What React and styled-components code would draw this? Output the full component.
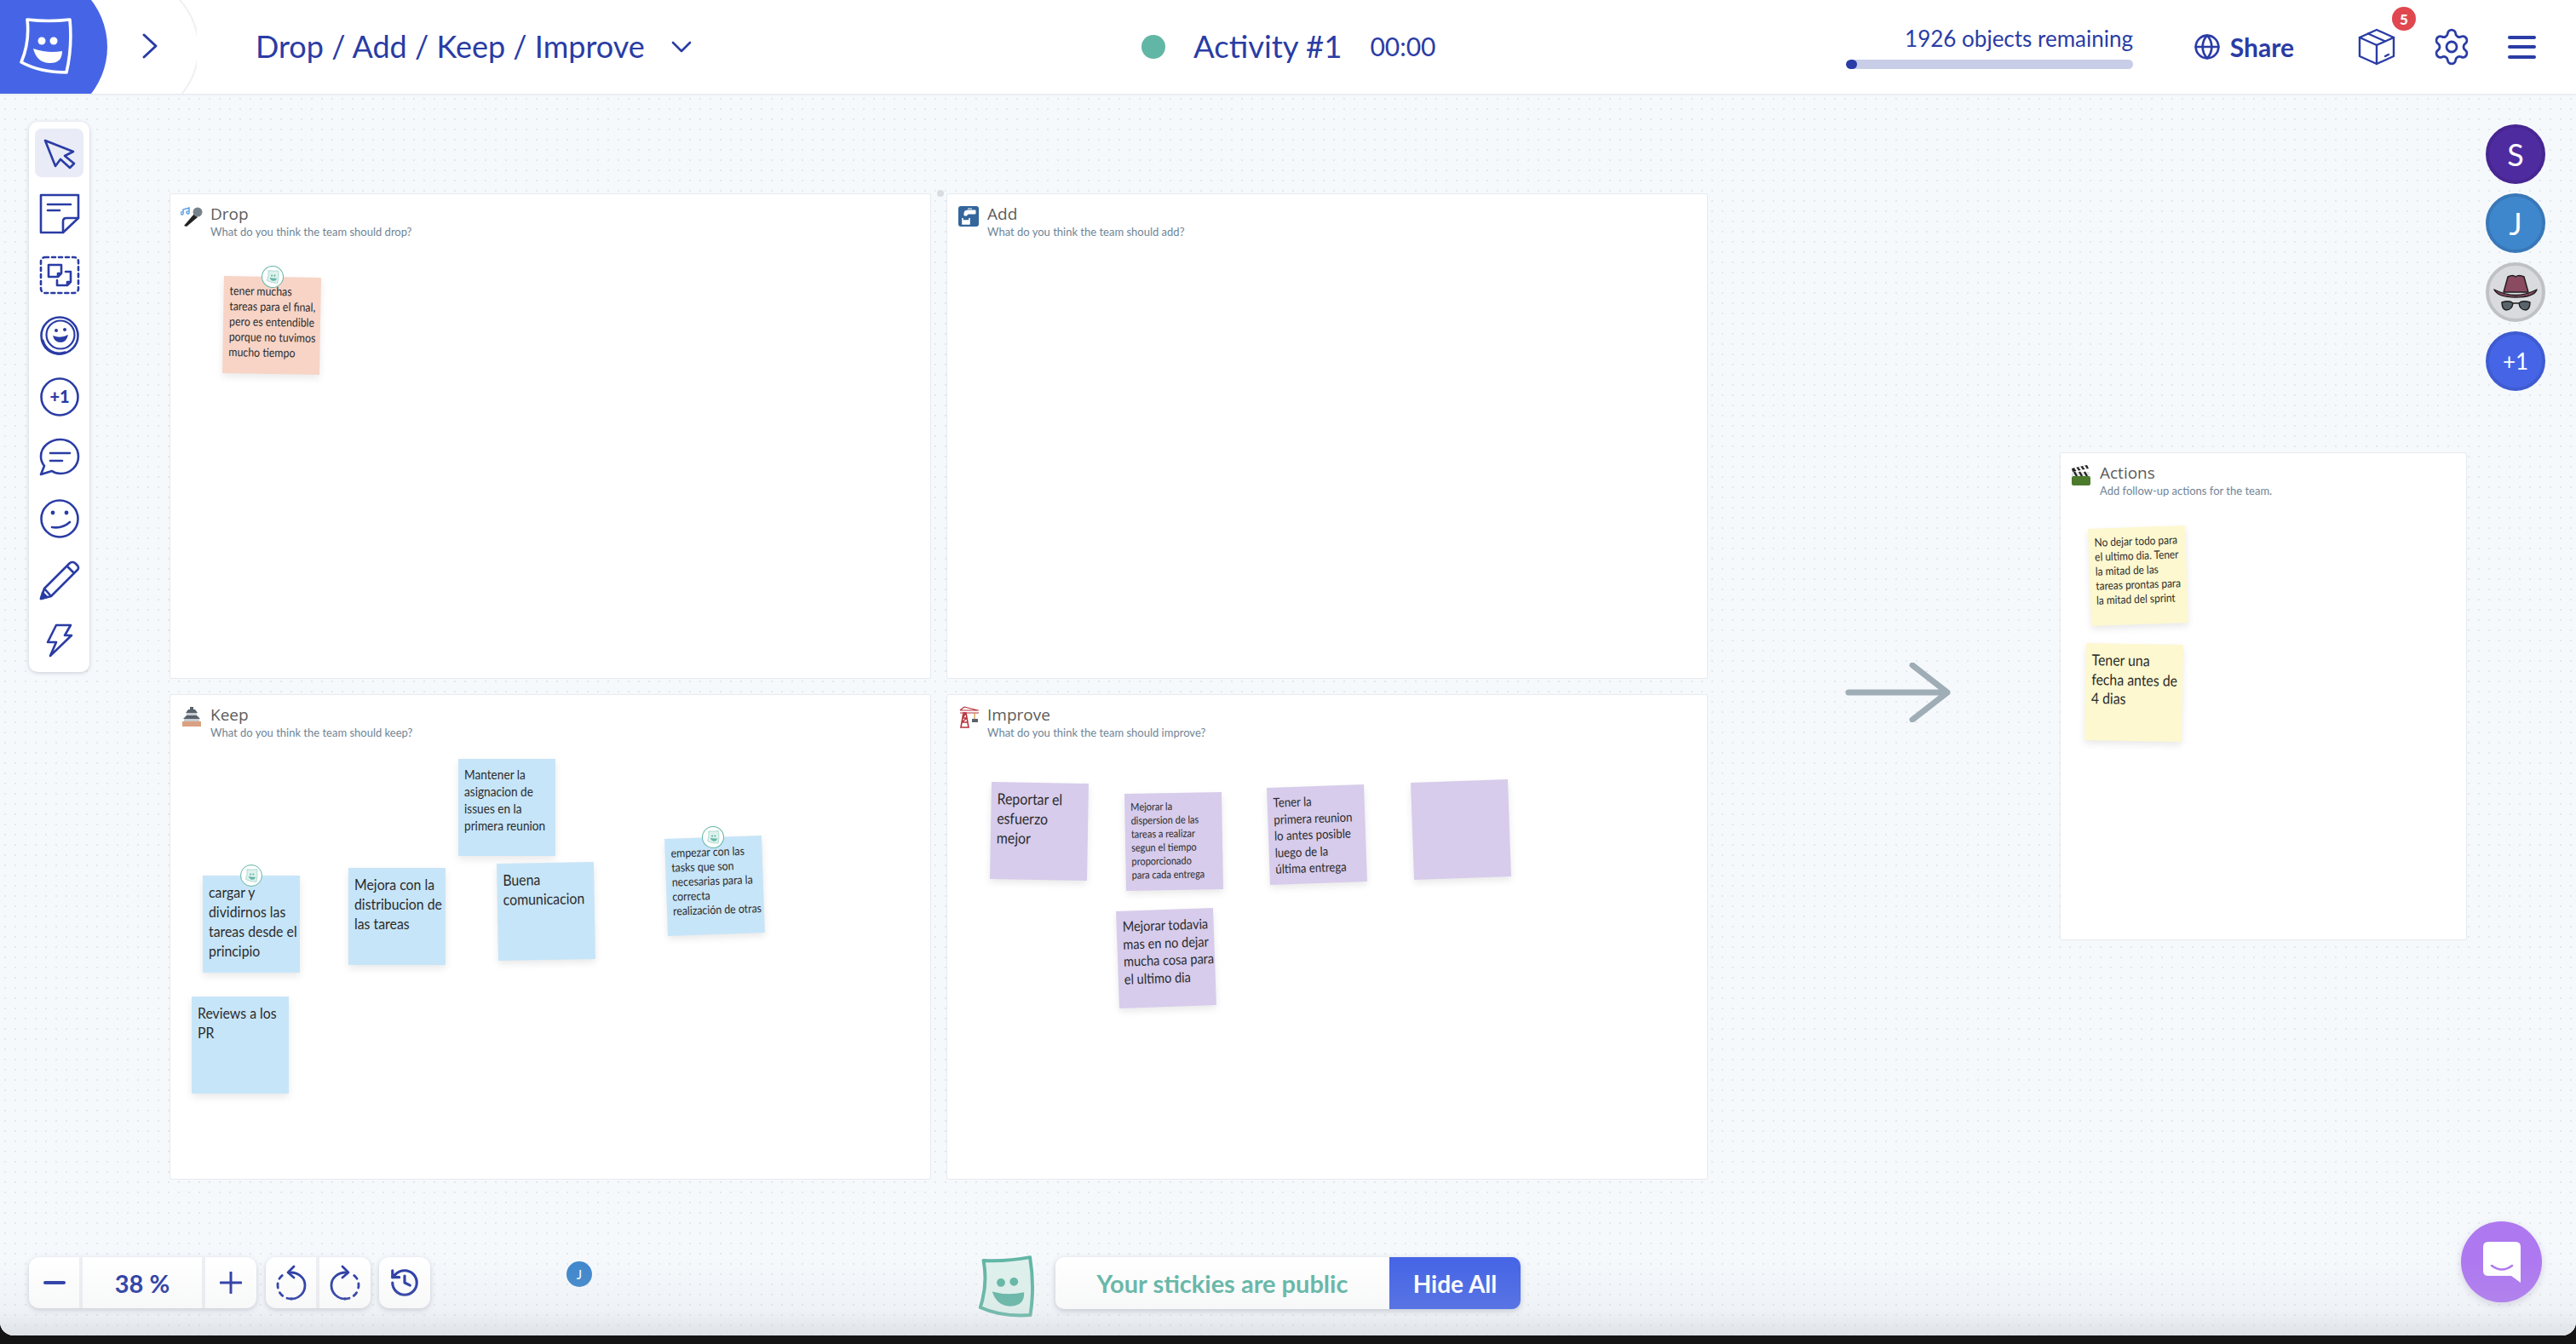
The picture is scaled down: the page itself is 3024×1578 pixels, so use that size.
import React from 'react'
import styled, { createGlobalStyle } from 'styled-components'
import { Globe, History, Settings } from 'lucide-react'

const INK = '#2a3ca5'
const TEAL = '#62b6a5'

const GlobalStyle = createGlobalStyle`
  html, body { margin: 0; padding: 0; background: #111; }
  body { font-family: Lato, "Noto Sans", sans-serif; color: ${INK}; }
`

const Frame = styled.div`
  width: 3024px;
  height: 1578px;
  background: #141414;
  overflow: hidden;
`

const Stage = styled.div`
  position: relative;
  width: 3024px;
  height: 1568px;
  display: flex;
  flex-direction: column;
  border-radius: 0 0 16px 16px;
  overflow: hidden;
  background-color: #f6f9fc;
`

const BottomShade = styled.div`
  position: absolute;
  left: 0;
  right: 0;
  bottom: 0;
  height: 90px;
  pointer-events: none;
  background: linear-gradient(
    to bottom,
    rgba(200, 204, 210, 0),
    rgba(200, 204, 210, 0.14) 65%,
    rgba(200, 204, 210, 0.5)
  );
  z-index: 5;
`

/* header */
const Header = styled.header`
  flex: 0 0 110px;
  height: 110px;
  display: flex;
  align-items: center;
  background: #fff;
  box-shadow: 0 1px 3px rgba(40, 50, 80, 0.1);
  z-index: 3;
`

const LeftSection = styled.div`
  flex: 0 0 1340px;
  display: flex;
  align-items: center;
`

const LogoBlock = styled.div`
  position: relative;
  flex: 0 0 231px;
  height: 110px;
  overflow: hidden;
`

const Ring = styled.div`
  position: absolute;
  left: 65px;
  top: -28px;
  width: 165px;
  height: 165px;
  border-radius: 50%;
  background: #fff;
  border: 2px solid #eef0f3;
  box-sizing: content-box;
`

const LogoDisc = styled.div`
  position: absolute;
  left: -52px;
  top: -34px;
  width: 178px;
  height: 178px;
  border-radius: 50%;
  background: #4665e6;
`

const LogoMark = styled.svg`
  position: absolute;
  left: 23px;
  top: 21px;
`

const ExpandIcon = styled.svg`
  position: absolute;
  left: 166px;
  top: 38px;
`

const Title = styled.div`
  margin-left: 69px;
  margin-bottom: 3px;
  font-size: 36px;
  white-space: nowrap;
`

const TitleCaret = styled.svg`
  margin-left: 31px;
`

const CenterSection = styled.div`
  display: flex;
  align-items: center;
`

const StatusDot = styled.div`
  width: 28px;
  height: 28px;
  border-radius: 50%;
  background: ${TEAL};
`

const ActivityName = styled.div`
  margin-left: 33px;
  margin-bottom: 3px;
  font-size: 36.5px;
  white-space: nowrap;
`

const Timer = styled.div`
  margin-left: 33px;
  margin-bottom: 2px;
  font-size: 30px;
  white-space: nowrap;
`

const RightSection = styled.div`
  margin-left: auto;
  padding-right: 47px;
  display: flex;
  align-items: center;
`

const Progress = styled.div`
  width: 337px;
  display: flex;
  flex-direction: column;
  align-items: flex-end;
  gap: 10px;
`

const ProgressLabel = styled.div`
  font-size: 26px;
  line-height: 30px;
  white-space: nowrap;
`

const ProgressTrack = styled.div`
  width: 100%;
  height: 11px;
  border-radius: 6px;
  background: #c8cde8;
  overflow: hidden;
`

const ProgressFill = styled.div`
  width: 13px;
  height: 100%;
  border-radius: 6px;
  background: ${INK};
`

const ShareButton = styled.div`
  margin-left: 71px;
  width: 118px;
  display: flex;
  align-items: center;
  justify-content: space-between;
  font-size: 30px;
  font-weight: 700;
`

const BoxButton = styled.div`
  position: relative;
  margin-left: 75px;
  width: 44px;
  height: 44px;
  display: flex;
`

const CountBadge = styled.div`
  position: absolute;
  left: 40px;
  top: -25px;
  width: 28px;
  height: 28px;
  border-radius: 50%;
  background: #e0474f;
  color: #fff;
  font-size: 17px;
  font-weight: 900;
  display: flex;
  align-items: center;
  justify-content: center;
`

const GearButton = styled.div`
  margin-left: 42px;
  display: flex;
`

const MenuButton = styled.div`
  margin-left: 42px;
  width: 33px;
  display: flex;
  flex-direction: column;
  gap: 7.5px;
`

const MenuLine = styled.div`
  height: 4px;
  border-radius: 2px;
  background: ${INK};
`

/* canvas */
const Canvas = styled.main`
  position: relative;
  flex: 1;
  padding: 118px 0 0 200px;
  background-color: #f6f9fc;
  background-image: radial-gradient(#e3e8ee 1px, transparent 1.3px);
  background-size: 12px 12px;
`

const Board = styled.div`
  display: grid;
  grid-template-columns: 892px 892px;
  grid-template-rows: 568px 568px;
  gap: 20px;
  width: 1804px;
`

const Panel = styled.section`
  position: relative;
  background: #fff;
  box-shadow: 0 0 0 1px #e7eaee;
  border-radius: 2px;
`

const ActionsPanel = styled(Panel)`
  position: absolute;
  left: 2419px;
  top: 422px;
  width: 476px;
  height: 571px;
`

const PanelHead = styled.div`
  display: grid;
  grid-template-columns: 26px auto;
  column-gap: 9px;
  padding: 11px 0 0 ${(p) => p.$inset || 12}px;
`

const PanelIcon = styled.svg`
  grid-row: 1 / span 2;
  margin-top: 2px;
`

const PanelTitle = styled.div`
  font-family: "Open Sans", sans-serif;
  font-size: 19px;
  line-height: 24px;
  color: #5c5c5c;
`

const PanelHint = styled.div`
  font-family: Lato, sans-serif;
  font-size: 13px;
  line-height: 17px;
  margin-top: 1px;
  color: #6f8596;
`

const BoardDot = styled.div`
  position: absolute;
  left: 1100px;
  top: 113px;
  width: 8px;
  height: 8px;
  border-radius: 50%;
  background: #d9dce0;
`

const stickyColors = {
  blue: '#c7e5f8',
  purple: '#d7cceb',
  yellow: '#fdf8cf',
  peach: '#f8d4c6'
}

const Sticky = styled.div`
  position: absolute;
  left: ${(p) => p.$x}px;
  top: ${(p) => p.$y}px;
  width: 114px;
  height: 114px;
  box-sizing: border-box;
  padding: 8px 7px;
  background: ${(p) => stickyColors[p.$color]};
  transform: rotate(${(p) => p.$rot || 0}deg);
  box-shadow: 0 4px 9px rgba(0, 0, 0, 0.09);
`

// the handwriting face isn't installed, so Lato gets squeezed to the same widths
const StickyText = styled.div`
  font-family: Lato, sans-serif;
  font-size: ${(p) => p.$size || 16}px;
  line-height: ${(p) => p.$lead || 20}px;
  color: #2b2b2b;
  white-space: pre;
  transform: scaleX(0.88);
  transform-origin: left top;
`

const OwnerBadge = styled.div`
  position: absolute;
  left: 44px;
  top: -13px;
  width: 26px;
  height: 26px;
  box-sizing: border-box;
  border-radius: 50%;
  background: #fff;
  border: 1px solid ${TEAL};
  display: flex;
  align-items: center;
  justify-content: center;
`

const FlowArrow = styled.svg`
  position: absolute;
  left: 2166px;
  top: 668px;
`

/* left toolbar */
const Toolbar = styled.nav`
  position: absolute;
  left: 34px;
  top: 33px;
  width: 71px;
  height: 646px;
  box-sizing: border-box;
  padding-top: 8px;
  display: flex;
  flex-direction: column;
  align-items: center;
  gap: 14.6px;
  background: #fff;
  border-radius: 10px;
  box-shadow: 0 1px 5px rgba(40, 50, 80, 0.22);
`

const ToolButton = styled.div`
  flex: 0 0 57px;
  width: 57px;
  display: flex;
  align-items: center;
  justify-content: center;
  border-radius: 8px;
  background: ${(p) => (p.$active ? '#e9ebf6' : 'transparent')};
`

const ToolGlyph = ({ children }) => (
  <svg width="48" height="48" viewBox="0 0 48 48" fill="none" stroke={INK} strokeWidth="2.6" strokeLinejoin="round" strokeLinecap="round">
    {children}
  </svg>
)

/* right avatars */
const Avatars = styled.div`
  position: absolute;
  right: 36px;
  top: 36px;
  display: flex;
  flex-direction: column;
  gap: 11px;
`

const Avatar = styled.div`
  width: 70px;
  height: 70px;
  box-sizing: border-box;
  border-radius: 50%;
  border: 4px solid ${(p) => p.$edge};
  background: ${(p) => p.$fill};
  color: #fff;
  font-size: ${(p) => p.$size || 36}px;
  display: flex;
  align-items: center;
  justify-content: center;
`

/* bottom controls */
const BottomBar = styled.div`
  position: absolute;
  left: 34px;
  top: 1366px;
  display: flex;
  align-items: flex-start;
`

const ControlGroup = styled.div`
  display: flex;
  height: 60px;
  margin-right: ${(p) => p.$gap || 0}px;
  background: #fff;
  border-radius: 12px;
  box-shadow: 0 2px 6px rgba(40, 50, 80, 0.22);
  overflow: hidden;
`

const ControlCell = styled.div`
  box-sizing: border-box;
  width: ${(p) => p.$width}px;
  display: flex;
  align-items: center;
  justify-content: center;
  font-size: 29px;
  font-weight: 700;
  & + & {
    border-left: 4px solid #eeeff2;
  }
`

const Mascot = styled.svg`
  margin-left: 642px;
  margin-top: -3px;
  transform: rotate(-4deg);
`

const StickiesPill = styled.div`
  margin-left: 22px;
  display: flex;
  width: 546px;
  height: 61px;
  border-radius: 10px;
  overflow: hidden;
  background: #fff;
  box-shadow: 0 2px 6px rgba(40, 50, 80, 0.25);
`

const PillLabel = styled.div`
  flex: 1;
  display: flex;
  align-items: center;
  justify-content: center;
  color: ${TEAL};
  font-size: 29px;
  font-weight: 700;
`

const PillAction = styled.div`
  flex: 0 0 154px;
  display: flex;
  align-items: center;
  justify-content: center;
  background: #4665e6;
  color: #fff;
  font-size: 28px;
  font-weight: 700;
`

const CursorTag = styled.div`
  position: absolute;
  left: 665px;
  top: 1371px;
  width: 30px;
  height: 30px;
  border-radius: 50%;
  background: #3f87cc;
  color: #fff;
  font-size: 15px;
  display: flex;
  align-items: center;
  justify-content: center;
`

const ChatButton = styled.div`
  position: absolute;
  left: 2889px;
  top: 1324px;
  width: 95px;
  height: 95px;
  border-radius: 50%;
  background: #ae78f0;
  box-shadow: 0 3px 10px rgba(80, 60, 120, 0.2);
  display: flex;
  align-items: center;
  justify-content: center;
`

const MascotShape = ({ line, fill, mouth, width, height }) => (
  <svg width={width} height={height} viewBox="0 0 64 66" fill="none">
    <path d="M9 2 Q34 5 59 2 Q62 34 55 64 Q24 64 2 52 Q12 28 9 2 Z" stroke={line} strokeWidth="4" fill={fill} strokeLinejoin="round" />
    <circle cx="26" cy="27" r="4.5" fill={mouth} />
    <circle cx="40" cy="27" r="4.5" fill={mouth} />
    <path d="M16 36 Q33 42 50 39 Q50 54 34 53 Q20 52 16 36 Z" fill={mouth} />
  </svg>
)

const MiniMascot = () => <MascotShape line="#a9d8ce" fill="#dff1ed" mouth={TEAL} width={15} height={16} />

const MicIcon = () => (
  <PanelIcon width="26" height="26" viewBox="0 0 26 26">
    <path d="M4 24 L16 10 L20 14 L7 25 Z" fill="#222" />
    <circle cx="20" cy="8" r="5.5" fill="#78828c" />
    <path d="M3 9 V5 L10 3 V8 M3 9 a1.5 1.5 0 1 1 -1 -1 M10 8 a1.5 1.5 0 1 1 -1 -1" stroke="#5b9fe6" strokeWidth="1.5" fill="none" />
  </PanelIcon>
)

const TapIcon = () => (
  <PanelIcon width="26" height="26" viewBox="0 0 26 26">
    <rect x="1" y="1" width="24" height="24" rx="3" fill="#34659c" />
    <path d="M8 9 Q8 6 12 6 H21 V10 H13 Q11 10 11 12 H8 Z M12 4 H17" fill="#fff" stroke="#fff" strokeWidth="1" />
    <path d="M6 15 V22 H14 V15 M6 18 H14" stroke="#fff" strokeWidth="1.6" fill="none" />
    <rect x="6" y="18" width="8" height="4" fill="#fff" />
  </PanelIcon>
)

const CastleIcon = () => (
  <PanelIcon width="26" height="26" viewBox="0 0 26 26">
    <rect x="11" y="1" width="4" height="3" fill="#59636c" />
    <path d="M6 8 L9 4 H17 L20 8 Z" fill="#59636c" />
    <rect x="7" y="8" width="12" height="3" fill="#c9ccd0" />
    <path d="M3 15 L7 11 H19 L23 15 Z" fill="#59636c" />
    <rect x="4" y="15" width="18" height="3" fill="#c9ccd0" />
    <rect x="2" y="18" width="22" height="6" fill="#d9a182" />
  </PanelIcon>
)

const CraneIcon = () => (
  <PanelIcon width="26" height="26" viewBox="0 0 26 26">
    <g stroke="#b8323c" strokeWidth="1.6" fill="none">
      <path d="M4 25 L7 8 H10 L13 25 Z M5 19 H12 M6 14 H11 M5 19 L11 14 M6 14 L10 8" />
      <path d="M3 8 H25 M3 5 H25 M8 1 L24 5 M8 1 L3 5" strokeWidth="1.2" />
    </g>
    <path d="M20 8 V15" stroke="#d9a054" strokeWidth="1.4" />
    <rect x="17" y="15" width="7" height="4" fill="#59636c" />
  </PanelIcon>
)

const ClapperIcon = () => (
  <PanelIcon width="26" height="26" viewBox="0 0 26 26">
    <path d="M2 5 L20 1 L22 5 L3 9 Z" fill="#222" />
    <path d="M6 4 L9 8 M11 3 L14 7 M16 2 L19 6" stroke="#fff" strokeWidth="2.2" />
    <rect x="2" y="9" width="21" height="5" fill="#e4e6e8" />
    <path d="M5 9 L8 14 M11 9 L14 14 M17 9 L20 14" stroke="#222" strokeWidth="2.4" />
    <rect x="2" y="14" width="22" height="11" rx="2" fill="#4c7a2d" />
  </PanelIcon>
)

const Note = ({ x, y, color, rot, size, lead, badge, children }) => (
  <Sticky $x={x} $y={y} $color={color} $rot={rot}>
    {badge && (
      <OwnerBadge>
        <MiniMascot />
      </OwnerBadge>
    )}
    <StickyText $size={size} $lead={lead}>{children}</StickyText>
  </Sticky>
)

export default function App() {
  return (
    <Frame>
      <GlobalStyle />
      <Stage>
        <Header>
          <LeftSection>
            <LogoBlock>
              <Ring />
              <LogoDisc />
              <LogoMark width="64" height="66" viewBox="0 0 64 66" fill="none">
                <path d="M9 2 Q34 5 59 2 Q62 34 55 64 Q24 64 2 52 Q12 28 9 2 Z" stroke="#fff" strokeWidth="3.6" strokeLinejoin="round" />
                <circle cx="26" cy="27" r="4.5" fill="#fff" />
                <circle cx="40" cy="27" r="4.5" fill="#fff" />
                <path d="M16 36 Q33 42 50 39 Q50 54 34 53 Q20 52 16 36 Z" fill="#fff" />
              </LogoMark>
              <ExpandIcon width="20" height="32" viewBox="0 0 20 32" fill="none" stroke={INK} strokeWidth="3" strokeLinecap="round" strokeLinejoin="round">
                <path d="M3 3 L17 16 L3 29" />
              </ExpandIcon>
            </LogoBlock>
            <Title>Drop / Add / Keep / Improve</Title>
            <TitleCaret width="24" height="14" viewBox="0 0 24 14" fill="none" stroke={INK} strokeWidth="2.6" strokeLinecap="round" strokeLinejoin="round">
              <path d="M2 2 L12 12 L22 2" />
            </TitleCaret>
          </LeftSection>
          <CenterSection>
            <StatusDot />
            <ActivityName>Activity #1</ActivityName>
            <Timer>00:00</Timer>
          </CenterSection>
          <RightSection>
            <Progress>
              <ProgressLabel>1926 objects remaining</ProgressLabel>
              <ProgressTrack>
                <ProgressFill />
              </ProgressTrack>
            </Progress>
            <ShareButton>
              <Globe size={32} strokeWidth={2} />
              Share
            </ShareButton>
            <BoxButton>
              <svg width="44" height="44" viewBox="0 0 44 44" fill="none" stroke={INK} strokeWidth="2.4" strokeLinejoin="round" strokeLinecap="round">
                <path d="M22 2 L42 11 V33 L22 42 L2 33 V11 Z" />
                <path d="M2 11 L22 20 L42 11 M22 20 V42 M12 6.5 L32 15.5" />
                <path d="M32 33 L36 31" />
              </svg>
              <CountBadge>5</CountBadge>
            </BoxButton>
            <GearButton>
              <Settings size={48} strokeWidth={1.4} />
            </GearButton>
            <MenuButton>
              <MenuLine />
              <MenuLine />
              <MenuLine />
            </MenuButton>
          </RightSection>
        </Header>

        <Canvas>
          <Board>
            <Panel>
              <PanelHead>
                <MicIcon />
                <PanelTitle>Drop</PanelTitle>
                <PanelHint>What do you think the team should drop?</PanelHint>
              </PanelHead>
              <Note x={62} y={97} color="peach" rot={1} size={14} lead={18} badge>
                {'tener muchas\ntareas para el final,\npero es entendible\nporque no tuvimos\nmucho tiempo'}
              </Note>
            </Panel>
            <Panel>
              <PanelHead>
                <TapIcon />
                <PanelTitle>Add</PanelTitle>
                <PanelHint>What do you think the team should add?</PanelHint>
              </PanelHead>
            </Panel>
            <Panel>
              <PanelHead>
                <CastleIcon />
                <PanelTitle>Keep</PanelTitle>
                <PanelHint>What do you think the team should keep?</PanelHint>
              </PanelHead>
              <Note x={338} y={75} color="blue" size={15.5} lead={20}>
                {'Mantener la\nasignacion de\nissues en la\nprimera reunion'}
              </Note>
              <Note x={38} y={212} color="blue" size={18} lead={23} badge>
                {'cargar y\ndividirnos las\ntareas desde el\nprincipio'}
              </Note>
              <Note x={209} y={203} color="blue" size={18} lead={23}>
                {'Mejora con la\ndistribucion de\nlas tareas'}
              </Note>
              <Note x={384} y={197} color="blue" rot={-1} size={18} lead={23}>
                {'Buena\ncomunicacion'}
              </Note>
              <Note x={582} y={167} color="blue" rot={-2} size={14} lead={17} badge>
                {'empezar con las\ntasks que son\nnecesarias para la\ncorrecta\nrealización de otras'}
              </Note>
              <Note x={25} y={354} color="blue" size={18} lead={23}>
                {'Reviews a los\nPR'}
              </Note>
            </Panel>
            <Panel>
              <PanelHead>
                <CraneIcon />
                <PanelTitle>Improve</PanelTitle>
                <PanelHint>What do you think the team should improve?</PanelHint>
              </PanelHead>
              <Note x={51} y={103} color="purple" rot={1} size={18} lead={23}>
                {'Reportar el\nesfuerzo\nmejor'}
              </Note>
              <Note x={209} y={115} color="purple" rot={-1} size={12.5} lead={16}>
                {'Mejorar la\ndispersion de las\ntareas a realizar\nsegun el tiempo\nproporcionado\npara cada entrega'}
              </Note>
              <Note x={377} y={107} color="purple" rot={-2} size={15} lead={19.5}>
                {'Tener la\nprimera reunion\nlo antes posible\nluego de la\núltima entrega'}
              </Note>
              <Note x={546} y={101} color="purple" rot={-2} />
              <Note x={200} y={252} color="purple" rot={-2} size={16.5} lead={20.5}>
                {'Mejorar todavia\nmas en no dejar\nmucha cosa para\nel ultimo dia'}
              </Note>
            </Panel>
          </Board>
          <BoardDot />

          <FlowArrow width="124" height="70" viewBox="0 0 124 70" fill="none" stroke="#9fadb7" strokeWidth="7" strokeLinecap="round" strokeLinejoin="round">
            <path d="M4 35 H120 M79 3 L120 35 L79 67" />
          </FlowArrow>

          <ActionsPanel>
            <PanelHead $inset={11}>
              <ClapperIcon />
              <PanelTitle>Actions</PanelTitle>
              <PanelHint>Add follow-up actions for the team.</PanelHint>
            </PanelHead>
            <Note x={34} y={87} color="yellow" rot={-2} size={13.5} lead={17}>
              {'No dejar todo para\nel ultimo dia. Tener\nla mitad de las\ntareas prontas para\nla mitad del sprint'}
            </Note>
            <Note x={29} y={224} color="yellow" rot={1} size={18} lead={22.5}>
              {'Tener una\nfecha antes de\n4 dias'}
            </Note>
          </ActionsPanel>

          <Toolbar>
            <ToolButton $active>
              <ToolGlyph>
                <path d="M7 9 L40 22 L30 27 L41 36 L36 41 L25 31 L19 39 Z" />
              </ToolGlyph>
            </ToolButton>
            <ToolButton>
              <ToolGlyph>
                <path d="M2 2 H46 V29 L28 46 H2 Z" />
                <path d="M28 46 V33 Q28 29 32 29 H46 M10 13 H37 M10 20 H24" />
              </ToolGlyph>
            </ToolButton>
            <ToolButton>
              <ToolGlyph>
                <rect x="2" y="3" width="44" height="42" rx="5" strokeDasharray="4 4" />
                <path d="M11 12 H26 V22 L22 26 H11 Z M26 22 H22 V26" />
                <path d="M31 20 H37 V32 L33 36 H21 V30 M37 32 H33 V36" />
              </ToolGlyph>
            </ToolButton>
            <ToolButton>
              <ToolGlyph>
                <circle cx="24" cy="24" r="21.5" />
                <path d="M4 30 A20 20 0 0 0 30 44" strokeWidth="3.4" />
                <circle cx="25" cy="23" r="16.5" strokeWidth="2.2" />
                <circle cx="20" cy="18" r="2" fill={INK} stroke="none" />
                <circle cx="30" cy="17" r="2" fill={INK} stroke="none" />
                <path d="M16 24 Q25 28 34 23 Q32 32 25 32 Q18 32 16 24 Z" fill={INK} stroke="none" />
              </ToolGlyph>
            </ToolButton>
            <ToolButton>
              <ToolGlyph>
                <circle cx="24" cy="24" r="21.5" />
                <text x="24" y="31" textAnchor="middle" fontFamily="Lato, sans-serif" fontWeight="900" fontSize="20" fill={INK} stroke="none">+1</text>
              </ToolGlyph>
            </ToolButton>
            <ToolButton>
              <ToolGlyph>
                <path d="M2 44 L6 34 Q2 29 2 23 C2 11 13 3 25 3 C37 3 46 12 46 23 C46 34 37 43 25 43 Q19 43 15 40 Z" />
                <path d="M13 19 H36 M13 28 H27" />
              </ToolGlyph>
            </ToolButton>
            <ToolButton>
              <ToolGlyph>
                <circle cx="24" cy="24" r="21.5" />
                <circle cx="16" cy="17" r="2.4" fill={INK} stroke="none" />
                <circle cx="32" cy="17" r="2.4" fill={INK} stroke="none" />
                <path d="M15 34 Q27 36 36 28" />
              </ToolGlyph>
            </ToolButton>
            <ToolButton>
              <ToolGlyph>
                <path d="M2 46 L6 34 L36 4 Q39 2 42 4 L45 7 Q47 10 45 12 L14 43 Z M6 34 L14 43 M33 8 L41 16" />
                <path d="M2 46 L9 44 L4 39 Z" fill={INK} />
              </ToolGlyph>
            </ToolButton>
            <ToolButton>
              <ToolGlyph>
                <path d="M20 6 H37 L30 18 H38 L13 42 L20 26 H10 Z" />
              </ToolGlyph>
            </ToolButton>
          </Toolbar>

          <Avatars>
            <Avatar $fill="#4f2ba0" $edge="#472692">S</Avatar>
            <Avatar $fill="#3f87cc" $edge="#3878b8">J</Avatar>
            <Avatar $fill="#d9dbde" $edge="#bfc1c4">
              <svg width="54" height="44" viewBox="0 0 54 44" stroke="#1d1d1d" strokeWidth="1.4" strokeLinejoin="round">
                <path d="M13 22 L18 4 Q24 1 27 4 Q31 1 37 4 L42 22 Z" fill="#8a4a60" />
                <path d="M2 19 Q27 32 52 19 Q49 28 27 28 Q6 28 2 19 Z" fill="#8a4a60" />
                <path d="M11 34 Q20 31 24 35 Q23 43 16 43 Q11 42 11 34 Z M31 35 Q35 31 44 34 Q44 42 39 43 Q32 43 31 35 Z M24 35 H31" fill="#59636c" />
              </svg>
            </Avatar>
            <Avatar $fill="#4665e6" $edge="#3f5bd2" $size={26}>+1</Avatar>
          </Avatars>

          <CursorTag>J</CursorTag>

          <BottomBar>
            <ControlGroup $gap={11}>
              <ControlCell $width={59}>
                <svg width="26" height="4" viewBox="0 0 26 4"><rect width="26" height="4" rx="2" fill={INK} /></svg>
              </ControlCell>
              <ControlCell $width={144}>38 %</ControlCell>
              <ControlCell $width={64}>
                <svg width="26" height="26" viewBox="0 0 26 26"><path d="M13 1 V25 M1 13 H25" stroke={INK} strokeWidth="3" strokeLinecap="round" /></svg>
              </ControlCell>
            </ControlGroup>
            <ControlGroup $gap={10}>
              <ControlCell $width={59}>
                <svg width="36" height="42" viewBox="0 0 36 42" fill="none" stroke={INK} strokeWidth="2.8" strokeLinecap="round" strokeLinejoin="round">
                  <path d="M17 9 C27 9 34 16 34 24 C34 33 27 40 18 40" />
                  <path d="M18 40 C9 40 2 33 2 24 C2 18 5 13 10 11" strokeDasharray="5 6" />
                  <path d="M21 2 L14 9 L21 15" />
                </svg>
              </ControlCell>
              <ControlCell $width={64}>
                <svg width="36" height="42" viewBox="0 0 36 42" fill="none" stroke={INK} strokeWidth="2.8" strokeLinecap="round" strokeLinejoin="round">
                  <path d="M19 9 C9 9 2 16 2 24 C2 33 9 40 18 40" />
                  <path d="M18 40 C27 40 34 33 34 24 C34 18 31 13 26 11" strokeDasharray="5 6" />
                  <path d="M15 2 L22 9 L15 15" />
                </svg>
              </ControlCell>
            </ControlGroup>
            <ControlGroup>
              <ControlCell $width={60}>
                <History size={38} strokeWidth={2} />
              </ControlCell>
            </ControlGroup>
            <Mascot width="70" height="78" viewBox="0 0 64 66" fill="none">
              <path d="M9 2 Q34 5 59 2 Q62 34 55 64 Q24 64 2 52 Q12 28 9 2 Z" stroke={TEAL} strokeWidth="3.6" fill="#dff1ed" strokeLinejoin="round" />
              <circle cx="26" cy="27" r="4.5" fill={TEAL} />
              <circle cx="40" cy="27" r="4.5" fill={TEAL} />
              <path d="M16 36 Q33 42 50 39 Q50 54 34 53 Q20 52 16 36 Z" fill={TEAL} />
            </Mascot>
            <StickiesPill>
              <PillLabel>Your stickies are public</PillLabel>
              <PillAction>Hide All</PillAction>
            </StickiesPill>
          </BottomBar>

          <ChatButton>
            <svg width="44" height="48" viewBox="0 0 44 48">
              <path d="M6 0 H38 Q44 0 44 6 V48 L33 40 H6 Q0 40 0 34 V6 Q0 0 6 0 Z" fill="#fff" />
              <path d="M10 28 Q22 37 34 28" stroke="#ae78f0" strokeWidth="2.6" fill="none" strokeLinecap="round" />
            </svg>
          </ChatButton>
        </Canvas>
        <BottomShade />
      </Stage>
    </Frame>
  )
}
